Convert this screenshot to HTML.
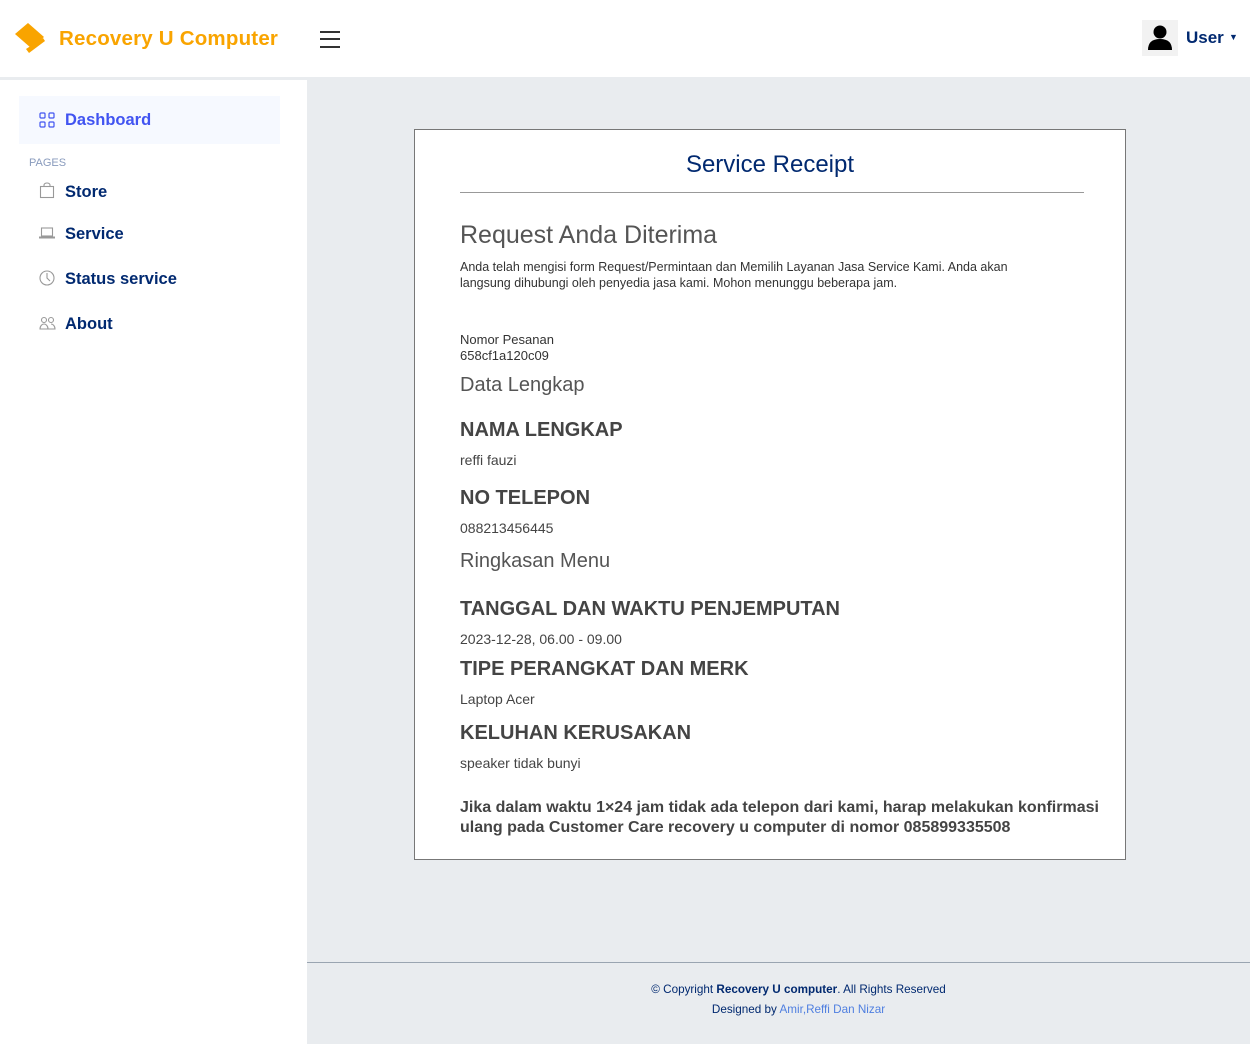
<!DOCTYPE html>
<html><head><meta charset="utf-8"><style>
*{margin:0;padding:0;box-sizing:border-box}
body{width:1250px;height:1044px;font-family:"Liberation Sans",sans-serif;background:#e9ecef;position:relative;overflow:hidden;color:#444}
.hdr{position:absolute;left:0;top:0;width:1250px;height:77px;background:#fff}
.logo{position:absolute;left:59px;top:27px;font-size:20.5px;font-weight:bold;color:#f9a400;letter-spacing:0.2px}
.side{position:absolute;left:0;top:80px;width:307px;height:964px;background:#fff}
.nav{position:absolute;left:65px;font-size:16.5px;font-weight:bold;color:#012970}
.ic{position:absolute;left:39px}
.card{position:absolute;left:414px;top:129px;width:712px;height:731px;background:#fff;border:1px solid #777}
.card *{position:absolute;white-space:nowrap}
.lbl{font-size:20px;font-weight:bold;color:#444;left:45px}
.val{font-size:14px;color:#444;left:45px}
.sec{font-size:20px;color:#555;left:45px;font-weight:normal}
</style></head><body>
<div class="hdr">
<svg style="position:absolute;left:14px;top:22px" width="32" height="32" viewBox="0 0 32 32"><path d="M1 12 L14 1 L30 15 L17 26Z" fill="#f9a400"/><path d="M12 27 L29 16 L31 19 L15 31Z" fill="#f9a400"/></svg>
<div class="logo">Recovery U Computer</div>
<div style="position:absolute;left:320px;top:31px;width:20px;height:2px;background:#333"></div>
<div style="position:absolute;left:320px;top:38px;width:20px;height:2px;background:#333"></div>
<div style="position:absolute;left:320px;top:46px;width:20px;height:2px;background:#333"></div>
<div style="position:absolute;left:1142px;top:20px;width:36px;height:36px;background:#f2f2f2"></div>
<svg style="position:absolute;left:1148px;top:24px" width="24" height="28" viewBox="0 0 24 28"><circle cx="12" cy="8" r="6.5" fill="#000"/><path d="M0 26 Q0 15 12 15 Q24 15 24 26Z" fill="#000"/></svg>
<div style="position:absolute;left:1186px;top:28px;font-size:17px;font-weight:bold;color:#012970">User</div>
<div style="position:absolute;left:1229px;top:32px;font-size:9px;color:#012970">▼</div>
</div>
<div class="side">
<div style="position:absolute;left:19px;top:16px;width:261px;height:48px;background:#f6f9ff"></div>
<svg class="ic" style="top:32px" width="16" height="16" viewBox="0 0 16 16" fill="none" stroke="#4154f1" stroke-width="1.2"><rect x="1" y="1" width="5" height="5" rx="1"/><rect x="10" y="1" width="5" height="5" rx="1"/><rect x="1" y="10" width="5" height="5" rx="1"/><rect x="10" y="10" width="5" height="5" rx="1"/></svg>
<div class="nav" style="top:31px;color:#4154f1">Dashboard</div>
<div style="position:absolute;left:29px;top:77px;font-size:11px;color:#899bbd">PAGES</div>
<svg class="ic" style="top:102px" width="16" height="17" viewBox="0 0 16 17" fill="none" stroke="#999" stroke-width="1.1"><rect x="1.5" y="4.5" width="13" height="11"/><path d="M5 4.5V3a3 2 0 0 1 6 0v1.5"/></svg>
<div class="nav" style="top:103px">Store</div>
<svg class="ic" style="top:146px" width="16" height="14" viewBox="0 0 16 14" fill="none" stroke="#999" stroke-width="1.1"><rect x="2.5" y="2" width="11" height="8"/><path d="M0 11.5h16" stroke-width="2"/></svg>
<div class="nav" style="top:145px">Service</div>
<svg class="ic" style="top:190px" width="16" height="16" viewBox="0 0 16 16" fill="none" stroke="#999" stroke-width="1.1"><circle cx="8" cy="8" r="7"/><path d="M8 3v5l3 3"/></svg>
<div class="nav" style="top:190px">Status service</div>
<svg class="ic" style="top:236px" width="17" height="14" viewBox="0 0 17 14" fill="none" stroke="#999" stroke-width="1.1"><circle cx="5" cy="4" r="2.5"/><circle cx="12" cy="4" r="2.5"/><path d="M1 13c0-3 2-5 4-5s4 2 4 5zM9 13h7c0-3-2-5-4-5"/></svg>
<div class="nav" style="top:235px">About</div>
</div>
<div class="card">
<div style="left:0;width:710px;text-align:center;top:21px;font-size:24px;color:#012970">Service Receipt</div>
<div style="left:45px;top:62px;width:624px;height:1px;background:#999"></div>
<div class="sec" style="top:91px;font-size:25px;color:#555">Request Anda Diterima</div>
<div style="left:45px;top:129px;font-size:12.5px;line-height:16px;color:#333">Anda telah mengisi form Request/Permintaan dan Memilih Layanan Jasa Service Kami. Anda akan<br>langsung dihubungi oleh penyedia jasa kami. Mohon menunggu beberapa jam.</div>
<div style="left:45px;top:202px;font-size:13px;line-height:16px;color:#333">Nomor Pesanan<br>658cf1a120c09</div>
<div class="sec" style="top:244px">Data Lengkap</div>
<div class="lbl" style="top:289px">NAMA LENGKAP</div>
<div class="val" style="top:322px">reffi fauzi</div>
<div class="lbl" style="top:357px">NO TELEPON</div>
<div class="val" style="top:390px">088213456445</div>
<div class="sec" style="top:420px">Ringkasan Menu</div>
<div class="lbl" style="top:468px">TANGGAL DAN WAKTU PENJEMPUTAN</div>
<div class="val" style="top:501px">2023-12-28, 06.00 - 09.00</div>
<div class="lbl" style="top:528px">TIPE PERANGKAT DAN MERK</div>
<div class="val" style="top:561px">Laptop Acer</div>
<div class="lbl" style="top:592px">KELUHAN KERUSAKAN</div>
<div class="val" style="top:625px">speaker tidak bunyi</div>
<div style="left:45px;top:668px;font-size:16px;font-weight:bold;line-height:20px;color:#444">Jika dalam waktu 1×24 jam tidak ada telepon dari kami, harap melakukan konfirmasi<br>ulang pada Customer Care recovery u computer di nomor 085899335508</div>
</div>
<div style="position:absolute;left:307px;top:962px;width:943px;height:1px;background:#9aa5b1"></div>
<div style="position:absolute;left:307px;top:983px;width:983px;text-align:center;font-size:11.7px;color:#012970">
<div>© Copyright <b>Recovery U computer</b>. All Rights Reserved</div>
<div style="margin-top:7px">Designed by <span style="color:#4f7fe0">Amir,Reffi Dan Nizar</span></div>
</div>
</body></html>
